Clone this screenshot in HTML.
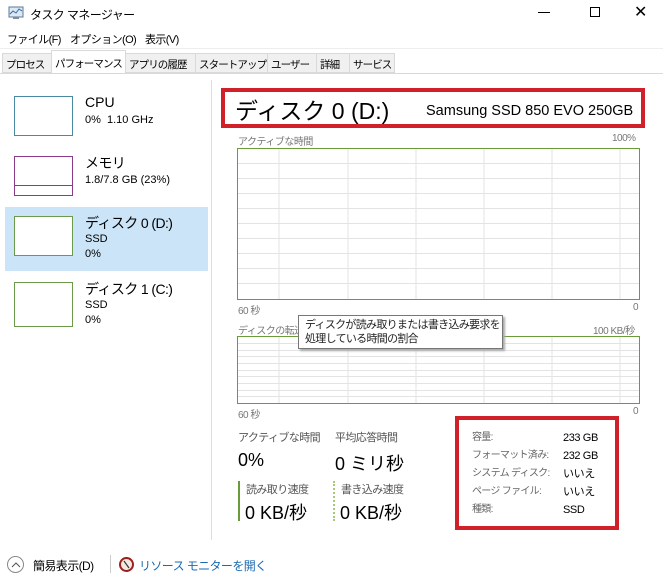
<!DOCTYPE html>
<html><head><meta charset="utf-8"><style>
*{margin:0;padding:0;box-sizing:border-box}
body{width:663px;height:588px;background:#fff;font-family:"Liberation Sans","Noto Sans CJK JP",sans-serif;color:#000;position:relative;overflow:hidden;font-size:12px}
.a{position:absolute;white-space:nowrap}
.g{color:#777;font-size:10px;letter-spacing:-0.5px}
.tab{position:absolute;top:53px;height:20px;border:1px solid #d9d9d9;background:#f0f0f0;font-size:10.5px;letter-spacing:-0.9px;padding:3px 3px;color:#000;white-space:nowrap;overflow:hidden}
.j{letter-spacing:-0.6px}
</style></head><body>
<svg class="a" style="left:7px;top:5px" width="18" height="16" viewBox="0 0 18 16"><rect x="2" y="2" width="14" height="10" fill="#dde8f0" stroke="#5a7a9a"/><path d="M3 9 L6 6 L9 8 L12 4 L15 6" stroke="#2a6ab0" fill="none"/><rect x="6" y="12" width="6" height="2" fill="#889"/></svg>
<div class="a j" style="left:30px;top:6px;font-size:12px">タスク マネージャー</div>
<div class="a" style="left:538px;top:12px;width:12px;height:1px;background:#000"></div>
<div class="a" style="left:590px;top:7px;width:10px;height:10px;border:1px solid #000"></div>
<div class="a" style="left:634px;top:2px;font-size:16px">✕</div>
<div class="a j" style="left:7px;top:31px;font-size:11px">ファイル(F)</div>
<div class="a j" style="left:70px;top:31px;font-size:11px">オプション(O)</div>
<div class="a j" style="left:145px;top:31px;font-size:11px">表示(V)</div>
<div class="a" style="left:0;top:48px;width:663px;height:1px;background:#eee"></div>
<div class="tab" style="left:2px;width:50px">プロセス</div>
<div class="tab" style="left:51px;top:50px;height:24px;width:75px;background:#fff;border-bottom:none;padding-top:5px">パフォーマンス</div>
<div class="tab" style="left:125px;width:71px">アプリの履歴</div>
<div class="tab" style="left:195px;width:73px">スタートアップ</div>
<div class="tab" style="left:267px;width:50px">ユーザー</div>
<div class="tab" style="left:316px;width:34px">詳細</div>
<div class="tab" style="left:349px;width:46px">サービス</div>
<div class="a" style="left:0;top:73px;width:663px;height:1px;background:#d9d9d9"></div>
<div class="a" style="left:211px;top:80px;width:1px;height:460px;background:#ddd"></div>
<!-- sidebar -->
<div class="a" style="left:5px;top:207px;width:203px;height:64px;background:#cce4f7"></div>
<div class="a" style="left:14px;top:96px;width:59px;height:40px;border:1px solid #4a8aa0"></div>
<div class="a" style="left:85px;top:94px;font-size:14px">CPU</div>
<div class="a" style="left:85px;top:114px;font-size:11px">0%&nbsp; 1.10 GHz</div>
<div class="a" style="left:14px;top:156px;width:59px;height:40px;border:1px solid #8b3a8b"></div>
<div class="a" style="left:15px;top:185px;width:57px;height:1px;background:#8b3a8b"></div>
<div class="a j" style="left:85px;top:153px;font-size:14px">メモリ</div>
<div class="a" style="left:85px;top:174px;font-size:11px">1.8/7.8 GB (23%)</div>
<div class="a" style="left:14px;top:216px;width:59px;height:40px;border:1px solid #6a9a4a;background:#fff"></div>
<div class="a j" style="left:85px;top:213px;font-size:14px">ディスク 0 (D:)</div>
<div class="a" style="left:85px;top:233px;font-size:11px">SSD</div>
<div class="a" style="left:85px;top:248px;font-size:11px">0%</div>
<div class="a" style="left:14px;top:282px;width:59px;height:45px;border:1px solid #6a9a4a"></div>
<div class="a j" style="left:85px;top:279px;font-size:14px">ディスク 1 (C:)</div>
<div class="a" style="left:85px;top:299px;font-size:11px">SSD</div>
<div class="a" style="left:85px;top:314px;font-size:11px">0%</div>
<!-- header -->
<div class="a" style="left:221px;top:88px;width:424px;height:40px;border:4px solid #d0202a"></div>
<div class="a" style="left:235px;top:92px;font-size:23px">ディスク 0 (D:)</div>
<div class="a" style="left:426px;top:103px;font-size:14.5px">Samsung SSD 850 EVO 250GB</div>
<div class="a g" style="left:238px;top:133px">アクティブな時間</div>
<div class="a g" style="left:612px;top:133px">100%</div>
<svg class="a" style="left:237px;top:148px" width="403" height="152">
<g stroke="#e3e3e3" stroke-width="1">
<path d="M42 0V152M111 0V152M179 0V152M247 0V152M315 0V152M383 0V152"/>
<path d="M0 15.5H403M0 30.5H403M0 45.5H403M0 60.5H403M0 75.5H403M0 90.5H403M0 105.5H403M0 120.5H403M0 135.5H403"/>
</g><rect x="0.5" y="0.5" width="402" height="151" fill="none" stroke="#6a9a3a"/></svg>
<div class="a g" style="left:238px;top:302px">60 秒</div>
<div class="a g" style="left:633px;top:302px">0</div>
<div class="a g" style="left:238px;top:322px">ディスクの転送</div>
<div class="a g" style="left:593px;top:322px">100 KB/秒</div>
<svg class="a" style="left:237px;top:336px" width="403" height="68">
<g stroke="#e3e3e3" stroke-width="1">
<path d="M42 0V68M111 0V68M179 0V68M247 0V68M315 0V68M383 0V68"/>
<path d="M0 7.5H403M0 14.5H403M0 20.5H403M0 27.5H403M0 34.5H403M0 40.5H403M0 47.5H403M0 54.5H403M0 60.5H403"/>
</g><rect x="0.5" y="0.5" width="402" height="67" fill="none" stroke="#6a9a3a"/></svg>
<div class="a g" style="left:238px;top:406px">60 秒</div>
<div class="a g" style="left:633px;top:406px">0</div>
<div class="a" style="left:298px;top:315px;width:205px;height:34px;background:#fff;border:1px solid #777;box-shadow:2px 2px 2px #aaa;font-size:11px;letter-spacing:-0.7px;line-height:14px;padding:2px 6px;color:#222">ディスクが読み取りまたは書き込み要求を<br>処理している時間の割合</div>
<div class="a j" style="left:238px;top:429px;font-size:11px;color:#555">アクティブな時間</div>
<div class="a j" style="left:335px;top:429px;font-size:11px;color:#555">平均応答時間</div>
<div class="a" style="left:238px;top:450px;font-size:18px">0%</div>
<div class="a" style="left:335px;top:450px;font-size:18px">0 ミリ秒</div>
<div class="a" style="left:238px;top:481px;width:2px;height:40px;background:#6a9a3a"></div>
<div class="a" style="left:333px;top:481px;width:0;height:40px;border-left:2px dotted #a8c878"></div>
<div class="a j" style="left:246px;top:481px;font-size:11px;color:#555">読み取り速度</div>
<div class="a j" style="left:341px;top:481px;font-size:11px;color:#555">書き込み速度</div>
<div class="a" style="left:245px;top:499px;font-size:18px">0 KB/秒</div>
<div class="a" style="left:340px;top:499px;font-size:18px">0 KB/秒</div>
<div class="a" style="left:455px;top:416px;width:164px;height:114px;border:4px solid #d0202a"></div>
<div class="a" style="left:472px;top:429px;font-size:10px;letter-spacing:-0.7px;line-height:18px;color:#666">容量:<br>フォーマット済み:<br>システム ディスク:<br>ページ ファイル:<br>種類:</div>
<div class="a" style="left:563px;top:429px;font-size:11px;letter-spacing:-0.4px;line-height:18px;color:#000">233 GB<br>232 GB<br>いいえ<br>いいえ<br>SSD</div>
<!-- footer -->
<div class="a" style="left:7px;top:556px;width:17px;height:17px;border:1px solid #888;border-radius:50%"></div>
<svg class="a" style="left:10px;top:559px" width="12" height="12"><path d="M2 8 L6 4 L10 8" stroke="#555" fill="none"/></svg>
<div class="a j" style="left:33px;top:557px;font-size:12px">簡易表示(D)</div>
<div class="a" style="left:110px;top:555px;width:1px;height:18px;background:#ccc"></div>
<div class="a" style="left:119px;top:557px;width:15px;height:15px;border:2px solid #9a2020;border-radius:50%;background:#f5e8e0"></div>
<svg class="a" style="left:119px;top:557px" width="15" height="15"><path d="M5 4 L10 11" stroke="#333" stroke-width="1.2"/></svg>
<div class="a j" style="left:139px;top:557px;font-size:12px;color:#1a6ab0">リソース モニターを開く</div>
</body></html>
